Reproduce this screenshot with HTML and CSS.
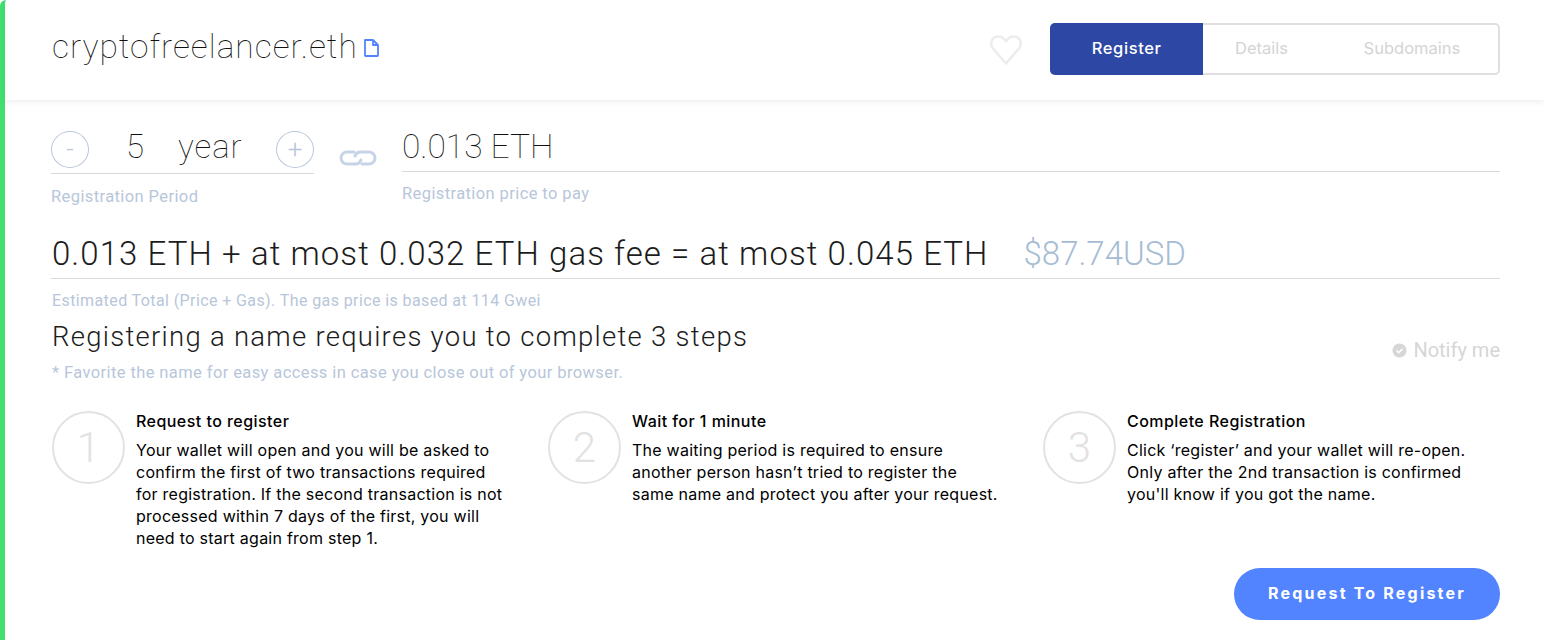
FILE: index.html
```html
<!DOCTYPE html>
<html lang="en">
<head>
    <meta charset="UTF-8">
    <meta name="viewport" content="width=device-width, initial-scale=1.0">
    <title>cryptofreelancer.eth</title>
    <link rel="stylesheet" href="styles.css">
</head>
<body>
    <div class="card">
        <header class="top">
            <div class="name">
                <h1>cryptofreelancer.eth</h1>
                <svg class="copy" width="17" height="20" viewBox="0 0 17 20" fill="none" stroke="#5284ff" stroke-width="1.800" stroke-linejoin="round"><path d="M2 2h8l5 5v10.500a.5.500 0 0 1-.5.500h-12a.5.500 0 0 1-.5-.5z"/><path d="M10 2v5h5"/></svg>
            </div>
            <svg class="heart" width="34" height="32" viewBox="0 0 34 32" fill="none" stroke="#ececec" stroke-width="2.500" stroke-linejoin="round"><path d="M17 29.500 4 14.500C.5 10 2.500 3 8.500 2.500c3.500-.3 6.500 1.500 8.500 5 2-3.500 5-5.300 8.500-5 6 .5 8 7.500 4.500 12z"/></svg>
            <nav class="tabs">
                <a class="tab active" href="#register">Register</a>
                <a class="tab details" href="#details">Details</a>
                <a class="tab subdomains" href="#subdomains">Subdomains</a>
            </nav>
        </header>

        <main class="content">
            <div class="pricing">
                <div class="period">
                    <div class="period-row">
                        <button class="round minus">-</button>
                        <span class="years">5</span>
                        <span class="unit">year</span>
                        <button class="round plus">+</button>
                    </div>
                    <p class="hint">Registration Period</p>
                </div>
                <svg class="chain" width="38" height="18" viewBox="0 0 38 18" fill="none" stroke="#c7d3e6" stroke-width="3" stroke-linecap="round"><path d="M15 3H8a6 6 0 0 0 0 12h9a6 6 0 0 0 5-4"/><path d="M23 15h7a6 6 0 0 0 0-12h-9a6 6 0 0 0-5 4"/></svg>
                <div class="price">
                    <div class="price-value">0.013 ETH</div>
                    <p class="hint">Registration price to pay</p>
                </div>
            </div>

            <div class="total">
                <span class="total-eth">0.013 ETH + at most 0.032 ETH gas fee = at most 0.045 ETH</span>
                <span class="total-usd">$87.74USD</span>
            </div>
            <p class="hint small">Estimated Total (Price + Gas). The gas price is based at 114 Gwei</p>

            <div class="steps-head">
                <div>
                    <h2>Registering a name requires you to complete 3 steps</h2>
                    <p class="hint note">* Favorite the name for easy access in case you close out of your browser.</p>
                </div>
                <div class="notify">
                    <svg width="15" height="15" viewBox="0 0 15 15"><circle cx="7.500" cy="7.500" r="7" fill="#d6d6d6"/><path d="M4.500 7.500l2.200 2.200 3.800-3.800" fill="none" stroke="#fff" stroke-width="1.600"/></svg>
                    <span>Notify me</span>
                </div>
            </div>

            <div class="steps">
                <div class="step">
                    <div class="num">1</div>
                    <div class="step-text">
                        <h3>Request to register</h3>
                        <p>Your wallet will open and you will be asked to confirm the first of two transactions required for registration. If the second transaction is not processed within 7 days of the first, you will need to start again from step 1.</p>
                    </div>
                </div>
                <div class="step">
                    <div class="num">2</div>
                    <div class="step-text">
                        <h3>Wait for 1 minute</h3>
                        <p>The waiting period is required to ensure another person hasn’t tried to register the same name and protect you after your request.</p>
                    </div>
                </div>
                <div class="step">
                    <div class="num">3</div>
                    <div class="step-text">
                        <h3>Complete Registration</h3>
                        <p>Click ‘register’ and your wallet will re-open. Only after the 2nd transaction is confirmed you'll know if you got the name.</p>
                    </div>
                </div>
            </div>

            <div class="actions">
                <button class="submit">Request To Register</button>
            </div>
        </main>
    </div>
</body>
</html>
```

FILE: styles.css
```css
* { box-sizing: border-box; }
html, body { height: 100%; }
body {
    margin: 0;
    background: #fff;
    color: #1c1c1c;
    font-family: "Roboto", "Liberation Sans", sans-serif;
    overflow: hidden;
}
p, h1, h2, h3 { margin: 0; font-weight: normal; }

.card {
    height: 640px;
    border-left: 5px solid #40e070;
    border-top-left-radius: 6px;
}

.top {
    height: 100px;
    display: flex;
    align-items: center;
    padding: 0 44px 4px 47px;
    box-shadow: 0 2px 6px rgba(0, 0, 0, 0.07);
}
.name { display: flex; align-items: center; gap: 5px; margin-right: auto; }
.name h1 { font-size: 33.500px; font-weight: 100; color: #111; letter-spacing: 1px; margin-top: -3px; }
.copy { margin-top: 0; }
.heart { margin-right: 27px; margin-top: 3px; }

.tabs {
    display: flex;
    width: 450px;
    height: 52px;
    border: 2px solid #dfdfdf;
    border-radius: 5px;
    margin-top: 2px;
}
.tab {
    display: flex;
    align-items: center;
    justify-content: center;
    padding-bottom: 3px;
    font-family: "Inter", sans-serif;
    font-size: 16.500px;
    color: #d4d4d4;
    text-decoration: none;
}
.tab.active {
    width: 154px;
    margin: -2px 0 -2px -2px;
    background: #2c47a4;
    color: #fff;
    font-weight: 500;
    letter-spacing: .6px;
    border-radius: 5px 0 0 5px;
}
.tab.details { width: 117px; }
.tab.subdomains { width: 179px; padding-left: 6px; }

.content { padding: 30px 44px 0 46px; }

.pricing { display: flex; }
.period { width: 263px; }
.period-row {
    display: flex;
    align-items: center;
    height: 44px;
    border-bottom: 1px solid #d9d9d9;
    padding-bottom: 5px;
}
.round {
    width: 38px;
    height: 37px;
    padding: 0;
    background: #fff;
    border: 1px solid #b8c6da;
    border-radius: 50%;
    color: #b8c6da;
    font-family: inherit;
    font-weight: 300;
    font-size: 26px;
    line-height: 1;
}
.years { width: 38px; margin: -6px 0 0 37px; font-size: 33px; font-weight: 100; color: #111; }
.unit { font-size: 33px; font-weight: 100; color: #111; letter-spacing: 1px; margin: -6px auto 0 14px; }
.hint { color: #b8c6da; font-size: 16.500px; letter-spacing: .4px; }
.period .hint { margin-top: 13px; }
.chain { margin: 19px 25px 0 25px; flex: none; }
.price { flex: 1; margin-top: -3px; }
.price-value {
    height: 45px;
    border-bottom: 1px solid #d9d9d9;
    font-size: 33.500px;
    font-weight: 100;
    color: #111;
    line-height: 40px;
}
.price .hint { margin-top: 12px; }

.total {
    display: flex;
    align-items: center;
    gap: 35px;
    height: 50px;
    margin-top: 23px;
    border-bottom: 1px solid #d9d9d9;
    padding-left: 1px;
    font-size: 33px;
    font-weight: 300;
}
.total-eth { color: #1c1c1c; letter-spacing: 1.070px; }
.total-usd { color: #a6bcd4; }
.hint.small { margin-top: 12px; margin-left: 1px; font-size: 16px; letter-spacing: .4px; }

.steps-head {
    display: flex;
    justify-content: space-between;
    align-items: flex-end;
    margin-top: 10px;
    padding-left: 1px;
}
.steps-head h2 { font-size: 27.500px; font-weight: 300; letter-spacing: 1.270px; }
.hint.note { margin-top: 10px; }
.notify {
    display: flex;
    align-items: center;
    gap: 6px;
    color: #d6d6d6;
    font-size: 20px;
    margin-bottom: 20px;
}

.steps {
    display: grid;
    grid-template-columns: 496px 495px 1fr;
    margin-top: 29px;
    margin-left: 1px;
}
.step { display: flex; }
.num {
    width: 73px;
    height: 73px;
    flex: none;
    display: flex;
    align-items: center;
    justify-content: center;
    border: 2px solid #e2e2e2;
    border-radius: 50%;
    color: #e2e2e2;
    font-size: 42px;
    font-weight: 300;
}
.step-text { margin-left: 11px; width: 368px; font-family: "Inter", sans-serif; }
.step-text h3 { font-size: 16px; font-weight: 500; letter-spacing: .45px; color: #000; line-height: 20px; }
.step-text p { margin-top: 8px; font-size: 16px; letter-spacing: .25px; line-height: 22px; color: #000; }

.actions { display: flex; justify-content: flex-end; margin-top: 19px; }
.submit {
    width: 266px;
    height: 52px;
    padding-bottom: 3px;
    background: #5284ff;
    border: 0;
    border-radius: 26px;
    color: #fff;
    font-family: "Inter", sans-serif;
    font-size: 16px;
    font-weight: 700;
    letter-spacing: 2.200px;
}
```
